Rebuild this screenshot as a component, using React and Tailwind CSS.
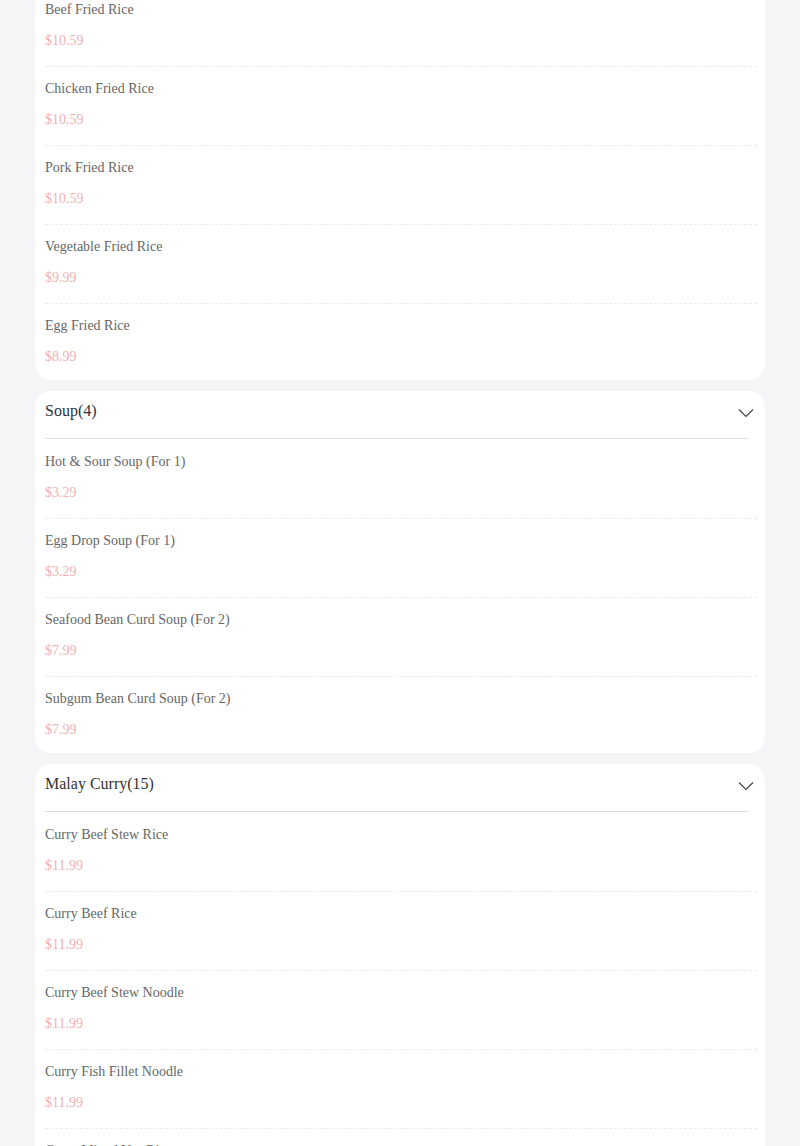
import React from 'react'

const sections = [
  {
    name: 'Fried Rice',
    hideHeader: true,
    items: [
      ['Beef Fried Rice', '10.59'],
      ['Chicken Fried Rice', '10.59'],
      ['Pork Fried Rice', '10.59'],
      ['Vegetable Fried Rice', '9.99'],
      ['Egg Fried Rice', '8.99'],
    ],
  },
  {
    name: 'Soup',
    items: [
      ['Hot & Sour Soup (For 1)', '3.29'],
      ['Egg Drop Soup (For 1)', '3.29'],
      ['Seafood Bean Curd Soup (For 2)', '7.99'],
      ['Subgum Bean Curd Soup (For 2)', '7.99'],
    ],
  },
  {
    name: 'Malay Curry',
    count: 15,
    items: [
      ['Curry Beef Stew Rice', '11.99'],
      ['Curry Beef Rice', '11.99'],
      ['Curry Beef Stew Noodle', '11.99'],
      ['Curry Fish Fillet Noodle', '11.99'],
      ['Curry Mixed Veg Rice', '11.99'],
    ],
  },
]

function Chevron() {
  return (
    <svg width="16" height="10" viewBox="0 0 16 10" fill="none" className="text-[#444] mt-[4px]">
      <path d="M1 1.5 L8 8.5 L15 1.5" stroke="currentColor" strokeWidth="1.2" />
    </svg>
  )
}

function MenuItem({ name, price }) {
  return (
    <div className="flex flex-col gap-[11px] pt-[12px] pb-[15px] last:pb-[13px] mr-[8px] border-b border-dashed border-[#ececec] last:border-b-0">
      <p className="text-[14px] leading-[20px] text-[#666]">{name}</p>
      <p className="text-[14px] leading-[20px] text-[#f0b2b2]">${price}</p>
    </div>
  )
}

function Section({ name, count, items, hideHeader }) {
  return (
    <div className={`bg-white rounded-[16px] pl-[10px] ${hideHeader ? 'pt-[20px]' : ''}`}>
      {!hideHeader && (
        <>
          <div className="flex items-center justify-between h-[47px] pr-[11px] pb-[7px]">
            <p className="text-[16px] leading-[20px] text-[#333]">{name}({count || items.length})</p>
            <Chevron />
          </div>
          <div className="h-px bg-[#e2e2e2] mr-[16px]"></div>
        </>
      )}
      <div className={`flex flex-col ${hideHeader ? '' : 'pt-px'}`}>
        {items.map(([n, p]) => (
          <MenuItem key={n} name={n} price={p} />
        ))}
      </div>
    </div>
  )
}

export default function App() {
  return (
    <div className="h-[1146px] overflow-hidden bg-[#f5f5f7]" style={{ fontFamily: '"Liberation Serif", serif' }}>
      <div className="flex flex-col gap-[11px] mx-[35px] -mt-[32px]">
        {sections.map(s => (
          <Section key={s.name} {...s} />
        ))}
      </div>
    </div>
  )
}
